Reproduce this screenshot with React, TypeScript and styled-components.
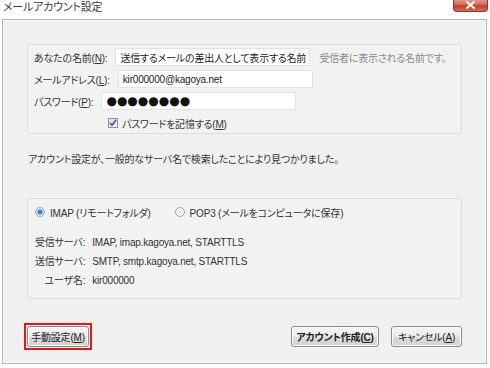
import React from 'react';
import styled, { createGlobalStyle } from 'styled-components';

const GlobalStyle = createGlobalStyle`
  html, body {
    margin: 0;
    padding: 0;
    background: #ffffff;
  }
  body {
    font-family: 'Liberation Sans', 'Noto Sans CJK JP', sans-serif;
    font-size: 10px;
    letter-spacing: -0.2px;
    color: #333333;
    font-feature-settings: 'palt';
  }
`;

const S = {
  Window: styled.div`
    width: 490px;
    height: 368px;
    display: flex;
    flex-direction: column;
    box-sizing: border-box;
    overflow: hidden;
  `,
  TitleBar: styled.div`
    height: 19px;
    display: flex;
    justify-content: space-between;
    align-items: flex-start;
    padding-left: 3px;
    padding-right: 2px;
  `,
  Title: styled.div`
    font-size: 11px;
    line-height: 14px;
    color: #3a3a3a;
  `,
  Close: styled.div`
    width: 35px;
    height: 13px;
    box-sizing: border-box;
    margin-top: -1px;
    border: 1px solid #8c3a30;
    border-top: none;
    border-radius: 0 0 4px 4px;
    background: linear-gradient(#e8a195, #d2634f 50%, #c0412c 55%, #d86a55);
    display: flex;
    align-items: center;
    justify-content: center;
  `,
  Frame: styled.div`
    margin: 0 3px 4px 2px;
    height: 345px;
    box-sizing: border-box;
    border: 1px solid #b4b4b4;
    box-shadow: inset 0 0 0 1px #fbfbfb;
    background: #f0f0f0;
    padding: 24px 24px 0 24px;
    display: flex;
    flex-direction: column;
  `,
  Group: styled.div<{ $pad: string }>`
    border: 1px solid #dcdcdc;
    border-radius: 3px;
    background: #f2f2f2;
    padding: ${(p) => p.$pad};
    display: flex;
    flex-direction: column;
  `,
  Row: styled.div`
    display: flex;
    align-items: center;
    height: 18px;
    margin-bottom: 4px;
  `,
  Label: styled.span`
    white-space: nowrap;
    margin-right: 8px;
  `,
  Input: styled.div`
    width: 195px;
    height: 18px;
    box-sizing: border-box;
    background: #ffffff;
    border: 1px solid #e2e2e2;
    padding: 0 4px;
    display: flex;
    align-items: center;
    white-space: nowrap;
    overflow: hidden;
    color: #222;
  `,
  Dots: styled.span`
    font-family: 'DejaVu Sans', sans-serif;
    font-size: 12px;
    letter-spacing: 0;
    color: #111;
  `,
  Hint: styled.span`
    margin-left: 9px;
    color: #888888;
    white-space: nowrap;
  `,
  CheckRow: styled.label`
    display: flex;
    align-items: center;
    gap: 4px;
    margin-left: 74px;
    margin-top: 2px;
    height: 14px;
  `,
  Check: styled.span`
    width: 10px;
    height: 10px;
    box-sizing: border-box;
    border: 1px solid #8e8f8f;
    background: linear-gradient(#dedede, #fbfbfb);
    display: flex;
    align-items: center;
    justify-content: center;
  `,
  Message: styled.div`
    margin-top: 19px;
    margin-bottom: 31px;
    margin-left: 1px;
    line-height: 14px;
  `,
  RadioRow: styled.div`
    display: flex;
    align-items: center;
    height: 14px;
  `,
  RadioItem: styled.label`
    display: flex;
    align-items: center;
    gap: 5px;
    margin-right: 24px;
  `,
  Radio: styled.span<{ $on?: boolean }>`
    width: 10px;
    height: 10px;
    box-sizing: border-box;
    border-radius: 50%;
    border: 1px solid #a3a3a3;
    background: ${(p) =>
      p.$on
        ? 'radial-gradient(circle, #1f78c8 0, #3d8fd6 2px, #bcd6ee 3px, #f4f4f4 4px)'
        : 'radial-gradient(circle, #e4e4e4 0, #f8f8f8 4px)'};
  `,
  Details: styled.div`
    margin-top: 17px;
    display: grid;
    grid-template-columns: max-content max-content;
    column-gap: 7px;
    row-gap: 5px;
    line-height: 14px;
  `,
  Key: styled.span`
    text-align: right;
  `,
  Buttons: styled.div`
    margin-top: 24px;
    display: flex;
    align-items: center;
  `,
  Highlight: styled.div`
    border: 2px solid #e8141c;
    padding: 1px;
    margin-left: -3px;
    display: flex;
  `,
  Spacer: styled.div`
    flex: 1;
  `,
  Button: styled.button<{ $bold?: boolean; $w: number }>`
    width: ${(p) => p.$w}px;
    height: 21px;
    box-sizing: border-box;
    border: 1px solid #8a8a8a;
    border-radius: 3px;
    background: linear-gradient(#f6f6f6, #e9e9e9 50%, #dcdcdc 51%, #d2d2d2);
    box-shadow: inset 0 0 0 1px #fcfcfc;
    font-family: inherit;
    font-size: 10px;
    letter-spacing: -0.2px;
    font-feature-settings: 'palt';
    font-weight: ${(p) => (p.$bold ? 700 : 400)};
    white-space: nowrap;
    color: #222;
    padding: 0;
    & + & {
      margin-left: 12px;
    }
  `,
};

const Key = ({ k }: { k: string }) => <u>{k}</u>;

function App() {
  return (
    <>
      <GlobalStyle />
      <S.Window>
        <S.TitleBar>
          <S.Title>メールアカウント設定</S.Title>
          <S.Close>
            <svg width="9" height="8" viewBox="0 0 9 8">
              <path d="M1 1 L8 7 M8 1 L1 7" stroke="#ffffff" strokeWidth="2" strokeLinecap="square" />
            </svg>
          </S.Close>
        </S.TitleBar>
        <S.Frame>
          <S.Group $pad="3px 5px 3px 6px">
            <S.Row>
              <S.Label>
                あなたの名前(<Key k="N" />):
              </S.Label>
              <S.Input>送信するメールの差出人として表示する名前</S.Input>
              <S.Hint>受信者に表示される名前です。</S.Hint>
            </S.Row>
            <S.Row>
              <S.Label>
                メールアドレス(<Key k="L" />):
              </S.Label>
              <S.Input>kir000000@kagoya.net</S.Input>
            </S.Row>
            <S.Row>
              <S.Label>
                パスワード(<Key k="P" />):
              </S.Label>
              <S.Input>
                <S.Dots>●●●●●●●●</S.Dots>
              </S.Input>
            </S.Row>
            <S.CheckRow>
              <S.Check>
                <svg width="8" height="8" viewBox="0 0 8 8">
                  <path d="M1 4 L3 6.3 L7 1" stroke="#2a4fa8" strokeWidth="1.5" fill="none" />
                </svg>
              </S.Check>
              <span>
                パスワードを記憶する(<Key k="M" />)
              </span>
            </S.CheckRow>
          </S.Group>

          <S.Message>アカウント設定が、一般的なサーバ名で検索したことにより見つかりました。</S.Message>

          <S.Group $pad="6px 6px 10px 7px">
            <S.RadioRow>
              <S.RadioItem>
                <S.Radio $on />
                <span>IMAP (リモートフォルダ)</span>
              </S.RadioItem>
              <S.RadioItem>
                <S.Radio />
                <span>POP3 (メールをコンピュータに保存)</span>
              </S.RadioItem>
            </S.RadioRow>
            <S.Details>
              <S.Key>受信サーバ:</S.Key>
              <span>IMAP, imap.kagoya.net, STARTTLS</span>
              <S.Key>送信サーバ:</S.Key>
              <span>SMTP, smtp.kagoya.net, STARTTLS</span>
              <S.Key>ユーザ名:</S.Key>
              <span>kir000000</span>
            </S.Details>
          </S.Group>

          <S.Buttons>
            <S.Highlight>
              <S.Button $w={62}>
                手動設定(<Key k="M" />)
              </S.Button>
            </S.Highlight>
            <S.Spacer />
            <S.Button $bold $w={88}>
              アカウント作成(<Key k="C" />)
            </S.Button>
            <S.Button $w={71}>
              キャンセル(<Key k="A" />)
            </S.Button>
          </S.Buttons>
        </S.Frame>
      </S.Window>
    </>
  );
}

export default App;
